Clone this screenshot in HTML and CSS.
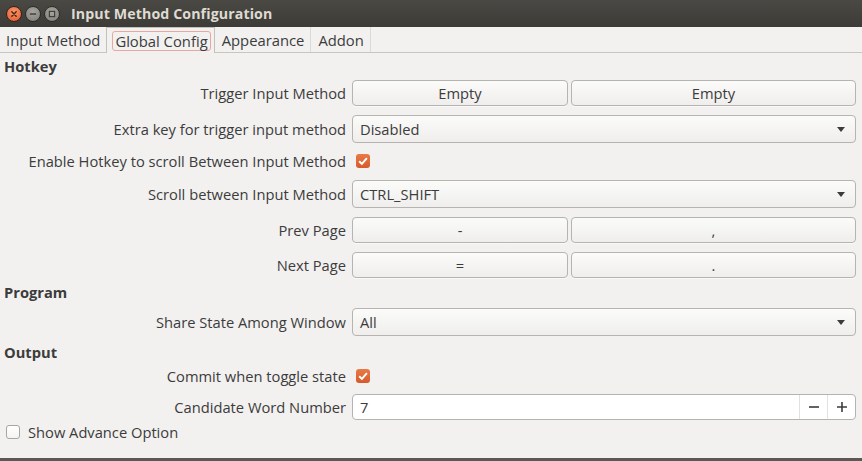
FILE: index.html
```html
<!DOCTYPE html>
<html>
<head>
<meta charset="utf-8">
<link rel="stylesheet" href="styles.css">
</head>
<body>
<div class="window">
  <div class="titlebar">
    <div class="wbtns">
      <span class="wb close"><svg width="16" height="16" viewBox="0 0 16 16"><path d="M5.5 5.5 L10.5 10.5 M10.5 5.5 L5.5 10.5" stroke="#4a2010" stroke-width="1.6" stroke-linecap="round"/></svg></span>
      <span class="wb"><svg width="16" height="16" viewBox="0 0 16 16"><path d="M4.5 8 H11.5" stroke="#3c3b37" stroke-width="1.6"/></svg></span>
      <span class="wb"><svg width="16" height="16" viewBox="0 0 16 16"><rect x="5" y="5" width="6" height="6" fill="none" stroke="#3c3b37" stroke-width="1.3"/></svg></span>
    </div>
    <div class="title">Input Method Configuration</div>
  </div>
  <div class="tabs">
    <div class="tab first">Input Method</div>
    <div class="tab active"><span class="focus">Global Config</span></div>
    <div class="tab">Appearance</div>
    <div class="tab">Addon</div>
    <div class="tabfill"></div>
  </div>
  <div class="content">
    <div class="section h-hotkey">Hotkey</div>
    <div class="row r1">
      <div class="label">Trigger Input Method</div>
      <div class="pair"><div class="btn b1">Empty</div><div class="btn b2">Empty</div></div>
    </div>
    <div class="row r2">
      <div class="label">Extra key for trigger input method</div>
      <div class="combo">Disabled<span class="arrow"></span></div>
    </div>
    <div class="row r3">
      <div class="label">Enable Hotkey to scroll Between Input Method</div>
      <div class="field"><span class="check on"><svg width="14" height="14" viewBox="0 0 14 14"><path d="M3.2 7.2 L5.9 9.9 L10.9 4.2" fill="none" stroke="#fff" stroke-width="2"/></svg></span></div>
    </div>
    <div class="row r4">
      <div class="label">Scroll between Input Method</div>
      <div class="combo">CTRL_SHIFT<span class="arrow"></span></div>
    </div>
    <div class="row r5">
      <div class="label">Prev Page</div>
      <div class="pair"><div class="btn b1">-</div><div class="btn b2">,</div></div>
    </div>
    <div class="row r6">
      <div class="label">Next Page</div>
      <div class="pair"><div class="btn b1">=</div><div class="btn b2">.</div></div>
    </div>
    <div class="section h-program">Program</div>
    <div class="row r7">
      <div class="label">Share State Among Window</div>
      <div class="combo">All<span class="arrow"></span></div>
    </div>
    <div class="section h-output">Output</div>
    <div class="row r8">
      <div class="label">Commit when toggle state</div>
      <div class="field"><span class="check on"><svg width="14" height="14" viewBox="0 0 14 14"><path d="M3.2 7.2 L5.9 9.9 L10.9 4.2" fill="none" stroke="#fff" stroke-width="2"/></svg></span></div>
    </div>
    <div class="row r9">
      <div class="label">Candidate Word Number</div>
      <div class="spin">
        <div class="spinval">7</div>
        <div class="spinbtn"><svg width="12" height="12" viewBox="0 0 12 12"><path d="M1 6 H11" stroke="#3c3c3c" stroke-width="1.6"/></svg></div>
        <div class="spinbtn"><svg width="12" height="12" viewBox="0 0 12 12"><path d="M1 6 H11 M6 1 V11" stroke="#3c3c3c" stroke-width="1.6"/></svg></div>
      </div>
    </div>
    <div class="adv"><span class="check off"></span><span>Show Advance Option</span></div>
  </div>
  <div class="bottom"></div>
</div>
</body>
</html>
```

FILE: styles.css
```css
* { box-sizing: border-box; }
html, body { margin: 0; padding: 0; }
body {
  width: 862px; height: 461px; overflow: hidden;
  background: #f2f1f0;
  font-family: "Open Sans", "Noto Sans", sans-serif;
  font-size: 14.7px;
  color: #3c3c3c;
}
.window { width: 862px; height: 461px; display: flex; flex-direction: column; }
.titlebar {
  height: 27px; flex: none;
  background: linear-gradient(#4a4944, #3c3b37);
  display: flex; align-items: center;
}
.wbtns { display: flex; gap: 3px; padding-left: 6px; }
.wb {
  width: 16px; height: 16px; border-radius: 50%;
  background: radial-gradient(circle at 50% 35%, #a7a59e, #7e7c75);
  display: flex; align-items: center; justify-content: center;
  border: 1px solid #2e2d2a;
}
.wb svg { display: block; }
.wb.close { background: radial-gradient(circle at 50% 35%, #f79a6c, #e2562b); border-color: #3a2218; }
.title { margin-left: 11px; color: #dfdbd2; font-weight: bold; font-size: 14.2px; letter-spacing: 0.1px; }

.tabs { height: 26px; flex: none; display: flex; align-items: stretch; border-bottom: 1px solid #c8c6c2; }
.tab { padding: 0 6px 0 7px; display: flex; align-items: center; border-right: 1px solid #dcdad6; font-size: 14.8px; color: #3c3c3c; }
.tab.first { padding-left: 6px; }
.tab.active { background: #f2f1f0; border-left: 1px solid #c3c1bc; border-right: 1px solid #c3c1bc; border-top: 1px solid #c3c1bc; margin-bottom: -1px; padding: 0 3px 0 5px; margin-left: -1px; }
.focus { border: 1px solid #e6a9a0; border-radius: 3px; padding: 0 2px; line-height: 18px; }
.tabfill { flex: 1; }

.content { flex: 1; padding: 0 6px 0 0; display: flex; flex-direction: column; }
.section { font-weight: bold; padding-left: 4px; display: flex; align-items: center; }
.h-hotkey { height: 26px; }
.h-program { height: 26px; margin-top: 0; }
.h-output { height: 22px; margin-top: 5px; }

.row { display: flex; align-items: center; height: 28px; }
.label { width: 346px; flex: none; text-align: right; white-space: nowrap; }
.row > :last-child { margin-left: 6px; }
.r1 { margin-top: 0; }
.r2 { margin-top: 8px; }
.r3 { margin-top: 4px; }
.r4 { margin-top: 5px; }
.r5 { margin-top: 8px; }
.r6 { margin-top: 7px; }
.r7 { margin-top: 3px; }
.r8 { height: 26px; }
.r9 { margin-top: 4px; }

.pair { flex: 1; display: flex; gap: 3px; }
.btn {
  height: 26px; border: 1px solid #b6b4b0; border-radius: 4px;
  background: linear-gradient(#fbfbfa, #efeeed);
  display: flex; align-items: center; justify-content: center;
  box-shadow: 0 1px 0 rgba(255,255,255,0.6);
}
.b1 { width: 216px; flex: none; }
.b2 { flex: 1; }
.combo {
  flex: 1; height: 28px; border: 1px solid #b6b4b0; border-radius: 4px;
  background: linear-gradient(#fbfbfa, #efeeed);
  display: flex; align-items: center; padding-left: 7px; position: relative;
}
.arrow {
  position: absolute; right: 10px; top: 11px;
  width: 0; height: 0;
  border-left: 4.5px solid transparent; border-right: 4.5px solid transparent;
  border-top: 5px solid #3c3c3c;
}
.field { flex: 1; display: flex; align-items: center; padding-left: 4px; }
.check { width: 14px; height: 14px; border-radius: 3px; display: inline-block; flex: none; }
.check svg { display: block; }
.check.on { background: linear-gradient(#e97a48, #d65a2c); border: none; }
.check.off { background: linear-gradient(#ffffff, #f4f4f3); border: 1px solid #a8a6a2; }

.spin {
  flex: 1; height: 26px; border: 1px solid #b6b4b0; border-radius: 4px;
  background: #fff; display: flex; align-items: stretch;
}
.spinval { flex: 1; display: flex; align-items: center; padding-left: 7px; }
.spinbtn { width: 28px; border-left: 1px solid #e2e1df; display: flex; align-items: center; justify-content: center; }

.adv { display: flex; align-items: center; height: 22px; padding-left: 6px; gap: 8px; }
.bottom { height: 3px; flex: none; background: #5a5955; }
```
